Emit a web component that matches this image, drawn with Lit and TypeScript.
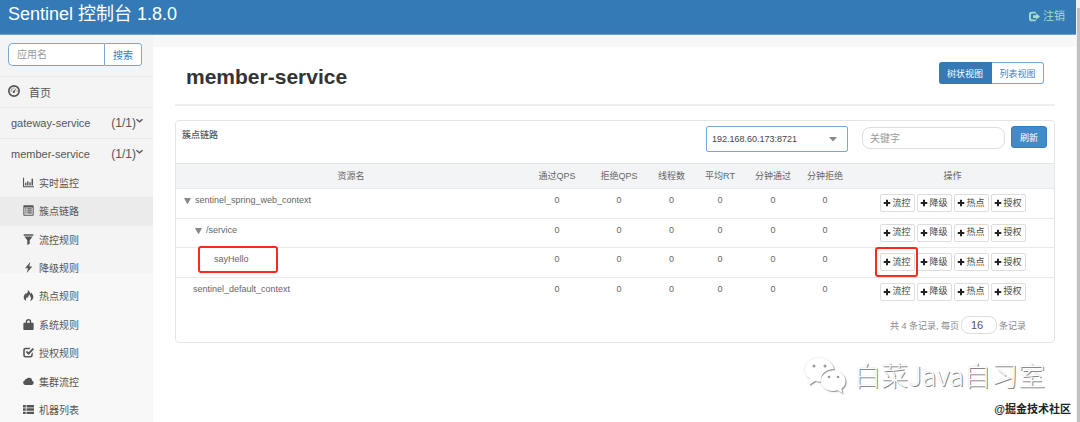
import { LitElement, html, css, svg } from "lit";
import { customElement, property, state } from "lit/decorators.js";

const icons: Record<string, unknown> = {
  dashboard: svg`<path fill-rule="evenodd" d="M8 0a8 8 0 1 0 0 16A8 8 0 0 0 8 0Zm0 2.200a5.800 5.800 0 1 1 0 11.600A5.800 5.800 0 0 1 8 2.200Z"/><path d="M11.200 4 9.200 8.800a1.500 1.500 0 1 1-1.400-1ZM3.400 7.400h1.500v1.400H3.400zM4.600 4.800H6v1.400H4.600zM7.200 3.400h1.300v1.400H7.200zM11.400 7.400h1.400v1.400h-1.400z"/>`,
  stats: svg`<path d="M0 1h1.600v12.400H16V15H0z"/><path d="M3 8.500h2v4H3zM6 6h2v6.500H6zM9.200 7.500h2v5h-2zM12.400 2.500h2.200v10h-2.200z"/>`,
  list: svg`<path fill-rule="evenodd" d="M1.500.500h13a1 1 0 0 1 1 1v13a1 1 0 0 1-1 1h-13a1 1 0 0 1-1-1v-13a1 1 0 0 1 1-1Zm.500 3v10.500h12V3.500Z"/><path d="M3.200 4.600h2v1.800h-2zM6.200 4.600h6.600v1.800H6.200zM3.200 7.600h2v1.800h-2zM6.200 7.600h6.600v1.800H6.200zM3.200 10.600h2v1.800h-2zM6.200 10.600h6.600v1.800H6.200z"/>`,
  filter: svg`<path d="M1 .500h14v2H1zM2 3.800h12L9.800 9v5L6.200 16V9Z"/>`,
  flash: svg`<path d="M10.500 0 3 9h4.300L5.500 16 13.500 6.400H9.200Z"/>`,
  fire: svg`<path d="M7 0c.7 3.200-1 4.300-2.600 6.200C4 5.300 4 4.600 3.600 4 3 6.500 1 7.600 1 10.600c0 2.500 1.500 4.400 3.800 5.400-1.300-2.700-.2-4.300 1.500-6.100.2 1 .3 1.500.8 2 .9-2.400.7-3.700 2.300-5.600-.1 3.200 2.400 3.500 2.300 6.100 0 1.500-.6 2.600-1.500 3.600 2.800-.7 4.800-2.800 4.800-5.800 0-3.400-2-4.100-2.700-6.600-.5.700-.8 1.400-.8 2.200C9.800 4.400 10 1.600 7 0Z"/>`,
  lock: svg`<path fill-rule="evenodd" d="M4 5.500V4a4 4 0 0 1 8 0v1.500h2.200a1.300 1.300 0 0 1 1.300 1.300V15a1 1 0 0 1-1 1h-13a1 1 0 0 1-1-1V6.800a1.300 1.300 0 0 1 1.300-1.300Zm2 0h4V4.200a2 2 0 0 0-4 0Z"/>`,
  check: svg`<path d="M11 1 9.300 3.200H4.200A1.600 1.600 0 0 0 2.600 4.800v6.700a1.600 1.600 0 0 0 1.600 1.600h6.200a1.600 1.600 0 0 0 1.600-1.600V10l2.200-2.200V12a3.300 3.300 0 0 1-3.300 3.300H3.600A3.300 3.300 0 0 1 .3 12V4.300A3.300 3.300 0 0 1 3.600 1Z"/><path d="m4 7.300 1.800-1.800 2.300 2.200L14 1.500l2 1.900-7.900 8.200Z"/>`,
  cloud: svg`<path d="M3.500 13A3.400 3.400 0 0 1 2.500 6.400 2.300 2.300 0 0 1 5 4.500 4.600 4.600 0 0 1 13.400 7 3.100 3.100 0 0 1 13 13Z"/>`,
  rows: svg`<path d="M0 1.500h4v3.500H0zM5.200 1.500H16V5H5.200zM0 6.300h4v3.500H0zM5.200 6.300H16v3.500H5.200zM0 11.100h4v3.500H0zM5.200 11.100H16v3.500H5.200z"/>`,
  logout: svg`<path d="M10 1v2.500H4.700A2 2 0 0 0 2.700 5.500v5a2 2 0 0 0 2 2H10V15H4.200A4.200 4.200 0 0 1 0 10.800V5.200A4.200 4.200 0 0 1 4.200 1Z"/><path d="M10.400 3.200 16 8l-5.600 4.800V10H5.800V6h4.600Z"/>`,
  plus: svg`<path d="M6 1.500h4V6h4.500v4H10v4.500H6V10H1.500V6H6Z"/>`,
  chevron: svg`<path fill="none" stroke="currentColor" stroke-width="3" d="m1 5 7 6 7-6"/>`,
  caret: svg`<path d="M0 4h16L8 13Z"/>`,
  triangle: svg`<path d="M0 2h16L9 15.500H7Z"/>`,
};

@customElement("app-icon")
class AppIcon extends LitElement {
  @property() name = "plus";
  static styles = css`
    :host { display: inline-flex; flex: none; width: 11px; height: 11px; }
    svg { width: 100%; height: 100%; fill: currentColor; }
  `;
  render() {
    return html`<svg viewBox="0 0 16 16" aria-hidden="true">${icons[this.name]}</svg>`;
  }
}

const menu = [
  ["stats", "实时监控"],
  ["list", "簇点链路"],
  ["filter", "流控规则"],
  ["flash", "降级规则"],
  ["fire", "热点规则"],
  ["lock", "系统规则"],
  ["check", "授权规则"],
  ["cloud", "集群流控"],
  ["rows", "机器列表"],
];

const columns = ["通过QPS", "拒绝QPS", "线程数", "平均RT", "分钟通过", "分钟拒绝"];
const actions = ["流控", "降级", "热点", "授权"];
const resources = [
  { name: "sentinel_spring_web_context", level: "root", open: true, marked: false },
  { name: "/service", level: "child", open: true, marked: false },
  { name: "sayHello", level: "leaf", open: false, marked: true },
  { name: "sentinel_default_context", level: "plain", open: false, marked: false },
];

@customElement("app-root")
class AppRoot extends LitElement {
  @state() active = "簇点链路";

  static styles = css`
    * { box-sizing: border-box; }
    :host {
      display: grid;
      grid-template-columns: minmax(0, 1fr) 4px;
      position: relative;
      height: 100vh;
      overflow: hidden;
      background: #fff;
      color: #666;
      font-family: "Liberation Sans", "Noto Sans CJK SC", sans-serif;
      font-size: 9px;
    }
    button, input, select { font: inherit; color: inherit; margin: 0; }
    button { cursor: pointer; }
    a { color: inherit; text-decoration: none; }
    ul { list-style: none; margin: 0; padding: 0; }
    .app { display: flex; flex-direction: column; min-width: 0; }
    .scrollbar { background: #f1f1f1; padding: 8px 0 0 1px; }
    .thumb { height: 100%; background: #c1c1c1; }

    .topbar {
      display: flex;
      justify-content: space-between;
      align-items: center;
      height: 35px;
      flex: none;
      padding: 0 11px 0 8px;
      background: #337ab7;
      border-bottom: 1px solid #6ba3d3;
      color: #fff;
    }
    .brand { font-size: 18px; line-height: 24px; padding-bottom: 6px; }
    .logout { display: flex; align-items: center; gap: 3px; font-size: 11px; line-height: 16px; padding-bottom: 2px; color: #a8dccb; }

    .body { display: flex; flex: 1; min-height: 0; }
    .sidebar { width: 153px; flex: none; background: #f8f8f8; color: #555; font-size: 11px; }
    .search { display: flex; height: 41px; padding: 8px 11px 10px 8px; background: #f4f4f4; font-size: 10px; }
    .search input {
      flex: 1;
      min-width: 0;
      padding: 0 8px;
      border: 1px solid #78a9d6;
      border-right: 0;
      border-radius: 5px 0 0 5px;
      background: #fff;
      outline: none;
    }
    ::placeholder { color: #999; opacity: 1; }
    .search button { width: 38px; padding: 0; border: 1px solid #78a9d6; border-radius: 0 3px 3px 0; background: #fff; color: #337ab7; }
    .entry { display: flex; align-items: center; height: 31px; padding: 0 10px 1px 11px; border-top: 1px solid #e7e7e7; background: #f4f4f4; }
    .home { padding: 0 8px 1px; gap: 9px; }
    .home app-icon { width: 12px; height: 12px; margin-bottom: 2px; }
    .entry .name { flex: 1; }
    .entry .count { font-size: 12px; }
    .entry .arrow { width: 7px; height: 7px; margin-bottom: 4px; }
    .menu { display: grid; grid-auto-rows: 1fr; height: 256px; font-size: 10px; background: linear-gradient(#f4f4f4 104px, #f8f8f8 104px); }
    .menu a { display: flex; align-items: center; gap: 5px; height: 100%; padding: 0 0 2px 23px; }
    .menu a.on { background: #ebebeb; }

    .main { flex: 1; min-width: 0; padding: 0 21px 0 22px; border-top: 12px solid #f8f8f8; }
    .heading { display: flex; justify-content: space-between; align-items: center; height: 59px; padding: 3px 11px 0; border-bottom: 2px solid #eee; }
    .heading h1 { margin: 0; font-size: 21px; line-height: 24px; color: #333; }
    .views { display: flex; height: 22px; margin-bottom: 8px; }
    .views button { width: 52px; padding: 0; background: #fff; color: #4383bd; border: 1px solid #78a9d6; border-left: 0; border-radius: 0 3px 3px 0; }
    .views button.on { width: 53px; background: #337ab7; border-color: #337ab7; color: #fff; border-radius: 3px 0 0 3px; }

    .card { margin-top: 14px; border: 1px solid #e3e6e8; border-radius: 4px; }
    .tools { display: flex; align-items: flex-start; height: 42px; padding: 5px 7px 0 6px; }
    .tools h2 { flex: 1; margin: 0; font-size: 9px; line-height: 18px; font-weight: 500; color: #555; }
    .picker { display: flex; align-items: center; position: relative; width: 142px; margin-right: 14px; }
    .picker select {
      appearance: none;
      width: 100%;
      height: 26px;
      padding: 0 5px;
      border: 1px solid #78a9d6;
      border-radius: 2px;
      background: #fff;
      color: #444;
      outline: none;
    }
    .picker app-icon { position: absolute; right: 11px; width: 8px; height: 8px; color: #888; pointer-events: none; }
    .keyword { width: 143px; height: 22px; margin: 1px 6px 0 0; padding: 0 7px; border: 1px solid #ddd; border-radius: 8px; font-size: 10px; background: #fff; outline: none; }
    .refresh { width: 36px; height: 22px; padding: 0; border: 1px solid #357ebd; border-radius: 3px; background: #428bca; color: #fff; }

    table { width: 100%; height: 143px; table-layout: fixed; border-collapse: separate; border-spacing: 0; }
    th { height: 25px; padding: 0 0 2px; background: #f2f4f6; border-top: 1px solid #e3e6e8; border-bottom: 0; font-weight: 400; text-align: center; }
    td { padding: 5px 0 0; border-top: 1px solid #e7e9ea; vertical-align: top; text-align: center; line-height: 13px; }
    .qps { width: 62px; }
    .threads { width: 43px; }
    .rt { width: 54px; }
    .minute { width: 52px; }
    .ops { width: 203px; }
    .resource { text-align: left; position: relative; }
    .node { display: flex; align-items: center; gap: 4px; }
    .node app-icon { width: 7px; height: 7px; color: #888; }
    .root { padding-left: 8px; }
    .child { padding-left: 19px; }
    .leaf { padding-left: 38px; }
    .plain { padding-left: 17px; }
    .buttons { display: flex; justify-content: center; gap: 2px; position: relative; }
    .buttons button {
      display: flex;
      align-items: center;
      justify-content: center;
      gap: 1px;
      width: 35px;
      height: 18px;
      padding: 0;
      border: 1px solid #ddd;
      border-radius: 2px;
      background: #fff;
      color: #444;
    }
    .buttons app-icon { width: 8px; height: 8px; color: #222; }
    .mark { position: absolute; border: 2px solid #fb2a1f; border-radius: 3px; pointer-events: none; }
    .mark.name { left: 22px; top: -2px; width: 80px; height: 27px; }
    .mark.op { left: 24px; top: -6px; width: 43px; height: 30px; }

    .pager { display: flex; justify-content: flex-end; align-items: center; gap: 2px; height: 36px; padding: 2px 28px 0 0; color: #888; }
    .pager input { width: 36px; height: 18px; padding: 0 9px; border: 1px solid #ddd; border-radius: 8px; background: #fff; color: #555; font-size: 11px; outline: none; }
    .pager label { display: flex; align-items: center; gap: 2px; }

    .brandmark { position: absolute; right: 35px; bottom: 27px; display: flex; align-items: center; gap: 7px; font-family: "Noto Sans CJK SC", sans-serif; font-weight: 300; font-size: 27px; line-height: 40px; color: #fff; text-shadow: 1px 1px 0 #888, 0 0 1px #ccc; }
    .brandmark svg { width: 44px; height: 40px; fill: #fff; filter: drop-shadow(1px 1px 0 #999) drop-shadow(0 0 1px #ddd); }
    .brandmark .eye { fill: #999; }
    .credit { position: absolute; right: 9px; bottom: 5px; font-size: 11px; line-height: 16px; font-weight: 700; color: #222; text-shadow: 0 0 2px #fff; }
  `;

  render() {
    return html`
      <div class="app">
        <header class="topbar">
          <div class="brand">Sentinel 控制台 1.8.0</div>
          <a class="logout" href="#"><app-icon name="logout"></app-icon>注销</a>
        </header>
        <div class="body">
          <nav class="sidebar">
            <div class="search">
              <input type="text" placeholder="应用名" aria-label="应用名" />
              <button type="button">搜索</button>
            </div>
            <a class="entry home" href="#"><app-icon name="dashboard"></app-icon>首页</a>
            ${["gateway-service", "member-service"].map(
              (app) => html`<a class="entry" href="#">
                <span class="name">${app}</span><span class="count">(1/1)</span><app-icon class="arrow" name="chevron"></app-icon>
              </a>`
            )}
            <ul class="menu">
              ${menu.map(
                ([icon, label]) => html`<li>
                  <a href="#" class=${label === this.active ? "on" : ""} @click=${() => (this.active = label)}>
                    <app-icon name=${icon}></app-icon>${label}
                  </a>
                </li>`
              )}
            </ul>
          </nav>
          <main class="main">
            <div class="heading">
              <h1>member-service</h1>
              <div class="views">
                <button type="button" class="on">树状视图</button>
                <button type="button">列表视图</button>
              </div>
            </div>
            <section class="card">
              <div class="tools">
                <h2>簇点链路</h2>
                <div class="picker">
                  <select aria-label="机器"><option>192.168.60.173:8721</option></select>
                  <app-icon name="caret"></app-icon>
                </div>
                <input class="keyword" type="text" placeholder="关键字" aria-label="关键字" />
                <button type="button" class="refresh">刷新</button>
              </div>
              <table>
                <colgroup>
                  <col /><col class="qps" /><col class="qps" /><col class="threads" /><col class="rt" />
                  <col class="minute" /><col class="minute" /><col class="ops" />
                </colgroup>
                <thead>
                  <tr><th>资源名</th>${columns.map((c) => html`<th>${c}</th>`)}<th>操作</th></tr>
                </thead>
                <tbody>
                  ${resources.map(
                    (r) => html`<tr>
                      <td class="resource">
                        <div class="node ${r.level}">${r.open ? html`<app-icon name="triangle"></app-icon>` : ""}${r.name}</div>
                        ${r.marked ? html`<div class="mark name"></div>` : ""}
                      </td>
                      ${columns.map(() => html`<td>0</td>`)}
                      <td>
                        <div class="buttons">
                          ${actions.map((a) => html`<button type="button"><app-icon name="plus"></app-icon>${a}</button>`)}
                          ${r.marked ? html`<div class="mark op"></div>` : ""}
                        </div>
                      </td>
                    </tr>`
                  )}
                </tbody>
              </table>
              <div class="pager">
                <label>共 4 条记录, 每页 <input type="text" .value=${"16"} /></label>
                <span>条记录</span>
              </div>
            </section>
          </main>
        </div>
      </div>
      <div class="scrollbar"><div class="thumb"></div></div>
      <div class="brandmark">
        <svg viewBox="0 0 44 40" aria-hidden="true">
          <path d="M16 3C8 3 2 8 2 15c0 4 2 7 5 9l-1 6 6-4c2 .6 4 .8 6 .6C17 19 23 14 31 14 30 8 24 3 16 3Z" />
          <path d="M30 16c-7 0-12 4.500-12 10s5 10 12 10c1.500 0 3-.2 4.500-.7l5 3-1-4.500c2.500-2 4-4.500 4-7.800 0-5.500-5.500-10-12.500-10Z" />
          <g class="eye">
            <circle cx="11" cy="11" r="1.500" /><circle cx="22" cy="11" r="1.500" />
            <circle cx="26" cy="22" r="1.300" /><circle cx="35" cy="22" r="1.300" />
          </g>
        </svg>
        <span>白菜Java自习室</span>
      </div>
      <div class="credit">@掘金技术社区</div>
    `;
  }
}
